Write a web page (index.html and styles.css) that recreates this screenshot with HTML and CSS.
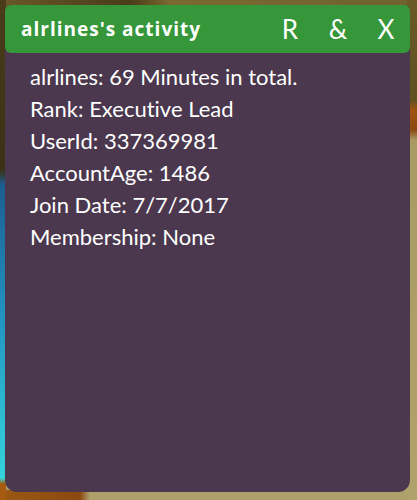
FILE: index.html
```html
<!DOCTYPE html>
<html lang="en">
<head>
    <meta charset="UTF-8">
    <title>alrlines's activity</title>
    <link rel="stylesheet" href="styles.css">
</head>
<body>
    <div class="scene">
        <div class="panel">
            <div class="panel-header">
                <span class="panel-title">alrlines's activity</span>
                <div class="panel-actions">
                    <button class="action-btn">R</button>
                    <button class="action-btn">&amp;</button>
                    <button class="action-btn">X</button>
                </div>
            </div>
            <div class="panel-body">
                <div class="info-line">alrlines: 69 Minutes in total.</div>
                <div class="info-line">Rank: Executive Lead</div>
                <div class="info-line">UserId: 337369981</div>
                <div class="info-line">AccountAge: 1486</div>
                <div class="info-line">Join Date: 7/7/2017</div>
                <div class="info-line">Membership: None</div>
            </div>
        </div>
    </div>
</body>
</html>
```
FILE: styles.css
```css
body {
    margin: 0;
    padding: 0;
    font-family: Lato, "Liberation Sans", sans-serif;
}

/* game world peeking out behind the panel */
.scene {
    width: 417px;
    height: 500px;
    padding: 5px 7px 8px 5px;
    box-sizing: border-box;
    background:
        linear-gradient(to bottom, #4a3c1a 0, #3c3116 170px, #1b5d92 185px, #2396c2 320px, #2fc6d6 440px, #35d3dc 478px, #a65a10 484px) left top / 6px 100% no-repeat,
        linear-gradient(to right, #9a5a14 0, #8a4a10 80px, transparent 90px) left bottom / 100% 10px no-repeat,
        linear-gradient(to bottom, #6b5a28 0, #5e5020 100px, #a0520e 110px, #8b4a12 130px, #a89b63 140px, #b0a26a 500px) right top / 10px 100% no-repeat,
        linear-gradient(to right, #6a5828 0, #4a3c1a 130px, #7a6a30 170px, #6f6230 417px) left top / 100% 8px no-repeat,
        #aea06a;
}

.panel {
    height: 100%;
    background-color: #4b384e;
    border-radius: 6px 6px 12px 12px;
    display: flex;
    flex-direction: column;
}

.panel-header {
    height: 48px;
    background-color: #36973a;
    border-radius: 6px;
    display: flex;
    align-items: center;
    justify-content: space-between;
    padding-left: 16px;
    color: #fff;
}

.panel-title {
    font-family: "Open Sans", sans-serif;
    font-weight: 700;
    font-size: 19px;
    letter-spacing: 1px;
}

.panel-actions {
    display: flex;
}

.action-btn {
    width: 48px;
    padding: 0;
    border: none;
    background: none;
    color: #fff;
    font-family: Lato, sans-serif;
    font-size: 26px;
    cursor: pointer;
}

.panel-body {
    padding: 8px 25px;
    color: #fff;
    font-size: 22px;
    line-height: 32px;
    font-variant-ligatures: none;
}
```
